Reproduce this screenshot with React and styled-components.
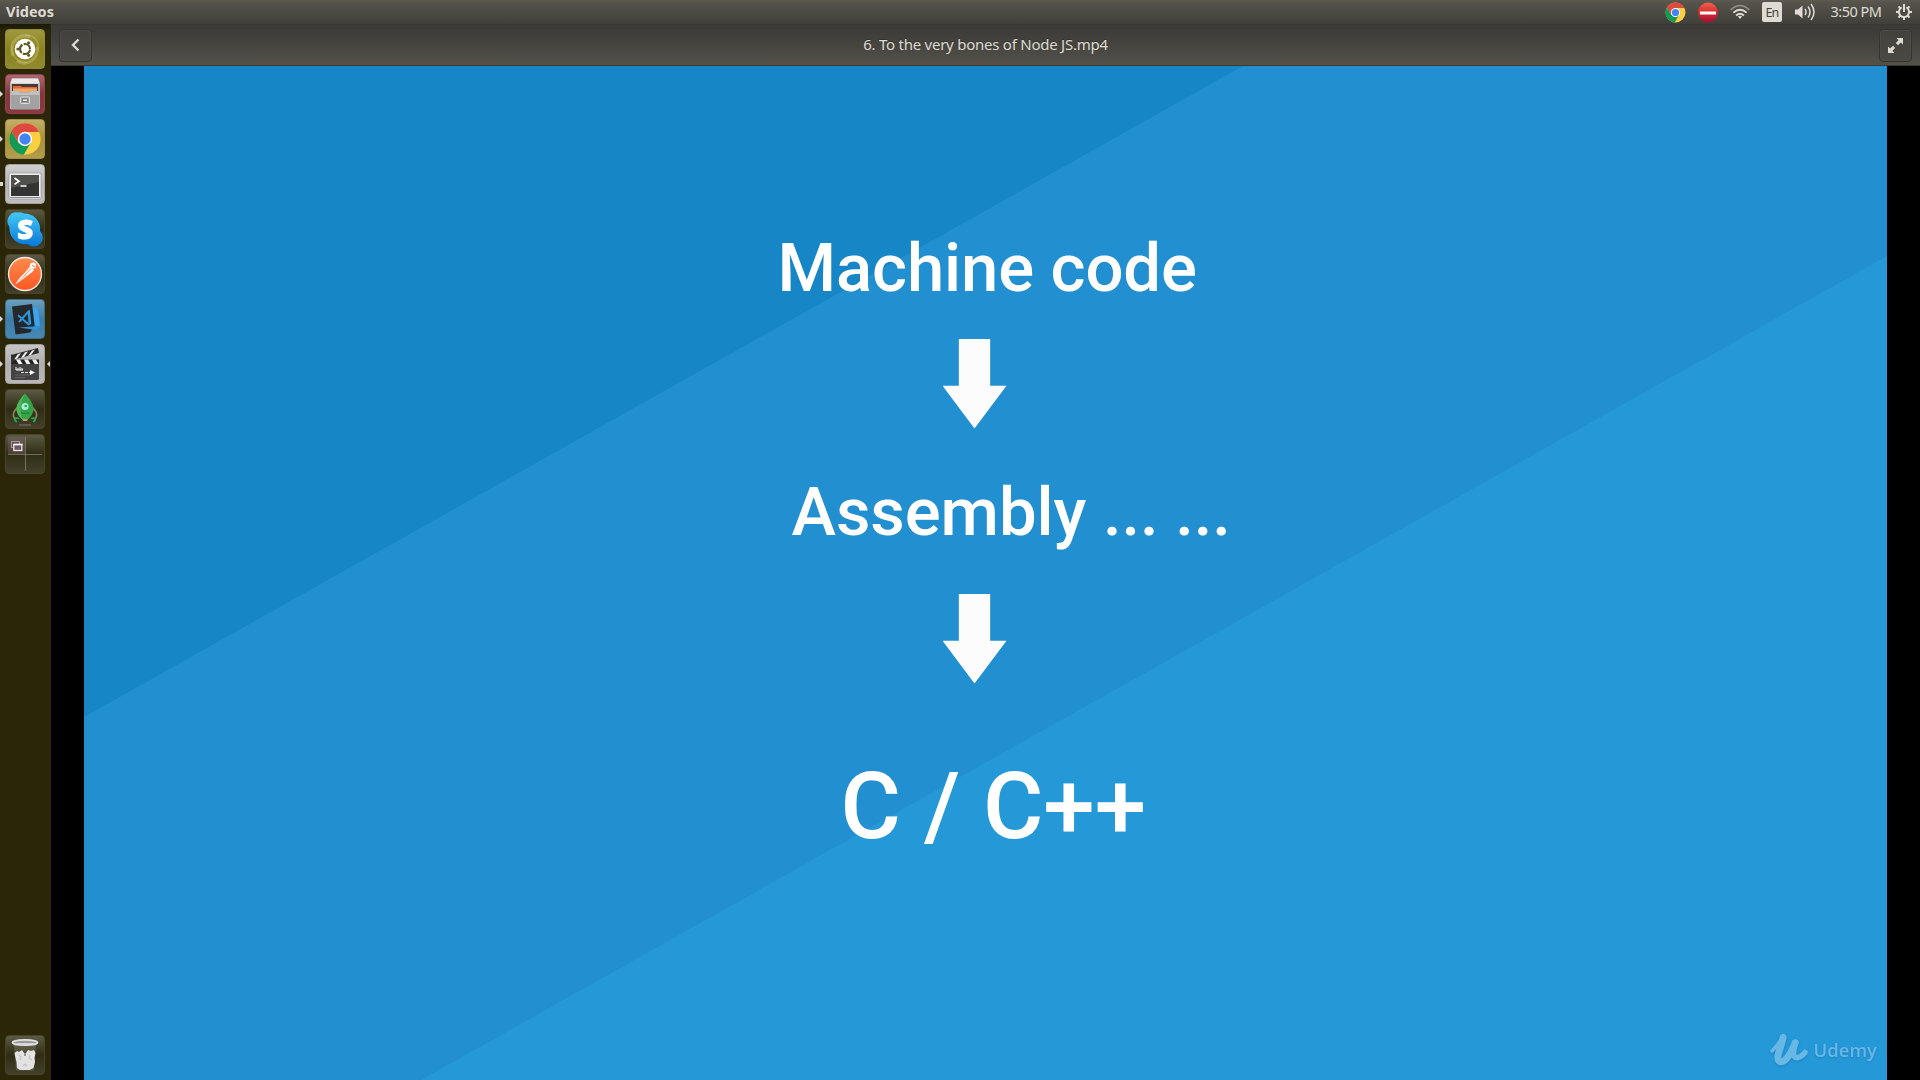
import React from "react";
import styled, { createGlobalStyle, css } from "styled-components";

const GlobalStyle = createGlobalStyle`
  * { box-sizing: border-box; }
  body { margin: 0; background: #000; overflow: hidden; }
`;

const uiFont = css`
  font-family: "Noto Sans", "Open Sans", sans-serif;
`;

const Desktop = styled.div`
  display: flex;
  flex-direction: column;
  width: 1920px;
  height: 1080px;
  overflow: hidden;
  background: #000;
`;

const Panel = styled.header`
  ${uiFont}
  display: flex;
  align-items: center;
  justify-content: space-between;
  flex: none;
  height: 24px;
  padding: 0 8px 0 6px;
  color: #dfdbd2;
  background: linear-gradient(#5d5b50 0, #55534a 3px, #403f3a 100%);
`;

const PanelTitle = styled.span`
  font-size: 14.5px;
  font-weight: 700;
  line-height: 22px;
  height: 24px;
  letter-spacing: 0;
`;

const Indicators = styled.div`
  display: flex;
  align-items: center;
  gap: 12px;
  height: 24px;

  svg { display: block; flex: none; }
`;

const Keyboard = styled.span`
  width: 20px;
  height: 20px;
  border-radius: 2px;
  background: #dfdbd2;
  color: #45433d;
  font-size: 12.5px;
  line-height: 21px;
  letter-spacing: -0.8px;
  text-align: center;
`;

const Clock = styled.span`
  width: 56px;
  height: 24px;
  font-size: 14.5px;
  line-height: 23px;
  letter-spacing: -0.5px;
  text-align: center;
  white-space: nowrap;
`;

const Workspace = styled.div`
  display: flex;
  flex: 1;
  min-height: 0;
`;

const Launcher = styled.nav`
  display: flex;
  flex-direction: column;
  gap: 5px;
  flex: none;
  width: 51px;
  padding: 5px 5px 5px 0;
  background: linear-gradient(#1c1902, #2a2607 7px);
  border-right: 1px solid #25241f;
`;

const Slot = styled.div`
  display: flex;
  align-items: center;
  height: 40px;
  width: 50px;
  margin-top: ${(p) => (p.$last ? "auto" : 0)};
`;

const Marker = styled.i`
  width: ${(p) => (p.$right ? 3 : 5)}px;
  height: ${(p) => (p.$square ? 4 : 6)}px;
  margin-right: ${(p) => (p.$right ? 0 : 2)}px;
  margin-left: ${(p) => (p.$right ? 2 : -2)}px;
  background: ${(p) => (p.$on ? "#d6d6d6" : "transparent")};
  clip-path: ${(p) =>
    p.$square ? "none" : p.$right ? "polygon(100% 0, 0 50%, 100% 100%)" : "polygon(0 0, 40% 0, 100% 50%, 40% 100%, 0 100%)"};
`;

const Tile = styled.div`
  flex: none;
  width: 40px;
  height: 40px;
  padding: 1px;
  border: 1px solid ${(p) => p.$edge};
  border-radius: 4px;
  background: linear-gradient(${(p) => p.$from}, ${(p) => p.$mid} 50%, ${(p) => p.$to});

  svg { display: block; margin: -1px; }
`;

const Player = styled.main`
  display: flex;
  flex-direction: column;
  flex: 1;
`;

const TitleBar = styled.div`
  ${uiFont}
  display: flex;
  align-items: center;
  justify-content: space-between;
  flex: none;
  height: 42px;
  padding: 0 8px;
  background: linear-gradient(#3c3b37 0, #3d3c38 6px, #53514a 100%);
  border-top: 1px solid #383733;
  border-bottom: 1px solid #3b3a34;
`;

const Title = styled.h1`
  margin: 0 0 2px;
  color: #dfdbd2;
  font-size: 15px;
  font-weight: 400;
  line-height: 20px;
  letter-spacing: -0.24px;
  text-shadow: 0 -1px #33322e;
  white-space: nowrap;
`;

const ToolButton = styled.button`
  display: flex;
  align-items: center;
  justify-content: center;
  width: 33px;
  height: 33px;
  padding: 0;
  border: 1px solid #35342f;
  border-radius: 4px;
  background: linear-gradient(#42413c, #4b4943);
  box-shadow: inset 0 0 0 1px #4d4b45;
`;

const Stage = styled.div`
  display: flex;
  flex: 1;
  padding: 0 33px;
  background: #000;
`;

const Slide = styled.section`
  position: relative;
  display: flex;
  flex-direction: column;
  flex: 1;
  overflow: hidden;
  background: #2290d0;
`;

const Backdrop = styled.svg`
  position: absolute;
  inset: 0;
`;

const Line = styled.div`
  position: relative;
  margin: ${(p) => p.$gap}px 0 0 ${(p) => p.$left}px;
  height: ${(p) => p.$height}px;
  color: #fff;
  font-family: Roboto, sans-serif;
  font-size: ${(p) => p.$size}px;
  font-weight: 500;
  line-height: ${(p) => p.$height}px;
  letter-spacing: ${(p) => p.$track || 0}px;
  white-space: pre;
`;

const Arrow = styled.i`
  position: relative;
  width: 64px;
  height: 89.5px;
  margin: ${(p) => p.$gap}px 0 0 858.5px;
  background: #fcfcfd;
  clip-path: polygon(25.5% 0, 74.5% 0, 74.5% 52.3%, 100% 52.3%, 50% 100%, 0 52.3%, 25.5% 52.3%);
`;

const Watermark = styled.div`
  position: absolute;
  right: 10px;
  bottom: 12px;
  display: flex;
  align-items: center;
  gap: 6px;
  height: 36px;
  color: #68b8e5;
  font: 600 18.5px/36px "Open Sans", sans-serif;
  letter-spacing: 0;
  filter: drop-shadow(0 1px 1px rgba(0, 60, 110, 0.25));
`;

const ChromeLogo = ({ size }) => (
  <svg width={size} height={size} viewBox="0 0 40 40">
    <circle cx="20" cy="20" r="19" fill="#fbcf42" />
    <path d="M3.500 10.500A19 19 0 0 1 36.500 10.500L37 11.500H20L12 24.500Z" fill="#de4a3f" />
    <path d="M3.500 10.500L12 24.500L20 28.500L27 24.500L18.500 39A19 19 0 0 1 3.500 10.500Z" fill="#139a57" />
    <circle cx="20" cy="20" r="8.700" fill="#fff" />
    <circle cx="20" cy="20" r="6.900" fill="#4384f3" />
  </svg>
);

const Art = ({ children }) => (
  <svg width="38" height="38" viewBox="1 1 38 38">{children}</svg>
);

const DashArt = () => (
  <Art>
    <g fill="none" stroke="#e3dfa0" strokeOpacity=".3" strokeWidth="3">
      <path d="M8 27C3 12 15 4 25 8" />
      <path d="M12 32C22 38 34 30 32 18" />
      <path d="M20 6C29 5 35 13 33 22M7 17C6 28 14 34 22 33" strokeWidth="1.500" />
    </g>
    <circle cx="20" cy="20" r="10.300" fill="#fff" />
    <circle cx="20" cy="20" r="5" fill="none" stroke="#5d5620" strokeWidth="2.200" strokeDasharray="9.200 1.270" strokeDashoffset="-.6" />
    <g fill="#5d5620"><circle cx="12.900" cy="20" r="1.500" /><circle cx="23.600" cy="13.800" r="1.500" /><circle cx="23.600" cy="26.200" r="1.500" /></g>
  </Art>
);

const FilesArt = () => (
  <Art>
    <path d="M7 4.500h26l2 5V35H5V9.500z" fill="#b9b9b9" />
    <path d="M7 4.500h26l1.500 5h-29z" fill="#e9e9e9" />
    <path d="M7 10h26v8H7z" fill="#4a3834" />
    <path d="M8 12h8l1 1h15v6H8z" fill="#df6a35" />
    <path d="M8 14.500h24v4H8z" fill="#f0a76b" />
    <path d="M5.500 17h8l2 1.500h9l2-1.500h8L34 35.500H6z" fill="#a2a2a2" />
    <path d="M5.500 17h8l2 1.500h9l2-1.500h8v4h-29z" fill="#c0c0c0" />
    <rect x="15.500" y="23" width="9" height="6.500" rx="1" fill="#999" stroke="#dedede" />
    <rect x="17.500" y="25" width="5" height="2.500" fill="#eee" stroke="#666" strokeWidth=".8" />
  </Art>
);

const TerminalArt = () => (
  <Art>
    <rect x="4" y="9" width="32" height="26" rx="1.500" fill="#eee" stroke="#8e8e8e" strokeWidth=".6" />
    <rect x="6" y="11" width="28" height="21" fill="#343432" />
    <path d="M6 11h28v7L6 24z" fill="#50504d" />
    <path d="M9.500 14l4.500 3.200-4.500 3.200M15.500 22h6" fill="none" stroke="#fff" strokeWidth="1.700" />
    <path d="M5 33.500h30" stroke="#888" />
  </Art>
);

const SkypeArt = () => (
  <Art>
    <defs><linearGradient id="sky" x2="0" y2="1"><stop stopColor="#43c8f5" /><stop offset="1" stopColor="#0778d8" /></linearGradient></defs>
    <path d="M13 3.500a9.500 9.500 0 0 1 6 1A15.500 15.500 0 0 1 35 22a9 9 0 0 1-12.500 13A15.500 15.500 0 0 1 4.500 18 9 9 0 0 1 13 3.500Z" fill="url(#sky)" />
    <text x="20" y="29.500" textAnchor="middle" fontFamily="Open Sans, sans-serif" fontWeight="800" fontSize="27" fill="#fff" stroke="#fff" strokeWidth="1">S</text>
  </Art>
);

const PostmanArt = () => (
  <Art>
    <defs><linearGradient id="post" x2="0" y2="1"><stop stopColor="#ff8b4c" /><stop offset="1" stopColor="#ff5722" /></linearGradient></defs>
    <circle cx="20" cy="20" r="16.500" fill="url(#post)" stroke="#f5ece6" strokeWidth="1.300" />
    <circle cx="28" cy="11.600" r="3.100" fill="#fff" />
    <path d="M25 12.500l4 3.500-5 5-8 5.500-6 4 5-7 5-5z" fill="#fff" />
    <path d="M15 26.500l11-12M19.500 23.500l6.500-4" stroke="#ff713a" strokeWidth=".8" />
    <path d="M27 11.300l3 1.500" stroke="#ff713a" />
  </Art>
);

const CodeArt = () => (
  <Art>
    <path d="M27.500 7.500L33 9l2 18.500-4 3.500-18-2 14-2z" fill="#1f86cf" />
    <path d="M27.500 7.500L33 9l2 18.500-5-1z" fill="#3fa3ea" />
    <path d="M7 7.500L27 5l2.500 22L25 33.500 10.500 35.500z" fill="#25282b" />
    <path d="M13.500 28.500L35 27l-4 4z" fill="#2f93db" />
    <path d="M24 11.500l1.300 13-1.800.8L13 16.200M24.500 24l-1-11.500-9.500 10.500" fill="none" stroke="#2d93da" strokeWidth="1.900" />
  </Art>
);

const VideosArt = () => (
  <Art>
    <rect x="6" y="19" width="28" height="17" rx="1.500" fill="#434343" />
    <path d="M6 11l27-7 1 5L7.500 16z" fill="#2c2c2c" />
    <path d="M9 15.500l4-5.500 3-.8-4 5.500zM16 13.700l4-5.500 3-.8-4 5.500zM23 11.900l4-5.500 3-.8-4 5.500z" fill="#efefef" />
    <rect x="6" y="15.500" width="28" height="4.500" fill="#222" />
    <path d="M11 15.500h4l2.500 4.500h-4zM19 15.500h4l2.500 4.500h-4zM27 15.500h4l2.500 4.500h-4z" fill="#f4f4f4" />
    <path d="M6 10v10l4-4z" fill="#333" />
    <path d="M11 26v-3m2 3v-2m2 2v-3m2 3v-2m-6 2h7" stroke="#fff" />
    <path d="M16 28.500h10" stroke="#ddd" strokeDasharray="3 1" />
    <path d="M25 26l5 2.500-5 2.500z" fill="#fff" />
    <path d="M10 31h14M10 33.500h10" stroke="#777" strokeWidth=".7" />
  </Art>
);

const RocketArt = () => (
  <Art>
    <path d="M12 19c-5 5-4 9-2 11M28 19c5 5 4 9 2 11" fill="none" stroke="#8a835c" strokeWidth="1.800" />
    <path d="M14 36h12" stroke="#777" strokeWidth="1" />
    <path d="M20 4.500C25 10 29 16 28.500 21c-.5 4-3 7-5 9h-7c-2-2-4.500-5-5-9C11 16 15 10 20 4.500Z" fill="#35a34a" />
    <path d="M20 4.500C15 10 11 16 11.500 21c.5 4 3 7 5 9h1C13 20 17 10 20 4.500Z" fill="#50b65d" />
    <circle cx="20" cy="17.500" r="3.500" fill="#a8f1d1" /><circle cx="20.700" cy="17" r="1.300" fill="#3a9779" />
    <path d="M16 23.500q4 2 8 0" fill="none" stroke="#1d7e36" strokeWidth="1.200" />
    <path d="M17 30h6l-1 2h-4z" fill="#b5a45f" />
    <path d="M14 29.500c-5-2-5 3-2 3M26 29.500c5-2 5 3 2 3" fill="none" stroke="#25ac4e" strokeWidth="1.800" />
  </Art>
);

const WorkspaceArt = () => (
  <Art>
    <path d="M3 3h17v17H3z" fill="#8e6e80" fillOpacity=".3" />
    <path d="M20.500 3v34M3 20.500h34" stroke="#8b8875" strokeOpacity=".7" />
    <rect x="6.500" y="7.500" width="8" height="6" fill="none" stroke="#a99ca4" />
    <rect x="8.800" y="10.500" width="8" height="6" fill="#6b5865" stroke="#e9e5e8" strokeWidth="1.300" />
    <path d="M8.500 10.500h9" stroke="#fff" strokeWidth="1.500" />
  </Art>
);

const TrashArt = () => (
  <Art>
    <path d="M9 10l2 25.500h18L31 10z" fill="#b4b4aa" fillOpacity=".22" />
    <path d="M9.500 18l2.500-2 2 1 3-2 2 3 2 0 2-3 3 1 3-1 1.500 3-1 5 .5 4-1.500 6-4 2H15l-3-2-.5-6-1-4z" fill="#e2e2e2" />
    <path d="M14 20l2 2-1 3M25 20l-1 3 3 2M18 31l2-2 2 2" fill="none" stroke="#c2c2c2" strokeWidth="1.200" />
    <path d="M20 18v3" stroke="#77756a" strokeWidth="1.400" />
    <ellipse cx="20" cy="7.500" rx="12.500" ry="2.700" fill="#9a9a9a" stroke="#e2e2e2" strokeWidth="1.800" />
    <path d="M11.500 9h17" stroke="#dcdcdc" strokeWidth="1.800" />
  </Art>
);

const glass = { edge: "#47442b", from: "#5c5944", mid: "#302d15", to: "#43402b" };

const apps = [
  { name: "Dash", Icon: DashArt, edge: "#8e8840", from: "#a19940", mid: "#8a821c", to: "#918a2d" },
  { name: "Files", Icon: FilesArt, on: true, edge: "#8c4249", from: "#ab6870", mid: "#86353c", to: "#8b3941" },
  { name: "Chrome", chrome: true, on: true, edge: "#a28f47", from: "#c2b06a", mid: "#a98f36", to: "#b49e4d" },
  { name: "Terminal", Icon: TerminalArt, on: true, square: true, edge: "#a2a1a0", from: "#cfcecf", mid: "#b6b4b5", to: "#c0bec0" },
  { name: "Skype", Icon: SkypeArt, ...glass },
  { name: "Postman", Icon: PostmanArt, ...glass },
  { name: "Code", Icon: CodeArt, on: true, edge: "#3c6d8b", from: "#6a9fbe", mid: "#3c7da9", to: "#4688b3" },
  { name: "Videos", Icon: VideosArt, on: true, active: true, edge: "#a19f9e", from: "#c6c4c4", mid: "#afadad", to: "#bab8b7" },
  { name: "Robomongo", Icon: RocketArt, ...glass },
  { name: "Workspaces", Icon: WorkspaceArt, ...glass },
  { name: "Trash", Icon: TrashArt, last: true, ...glass },
];

const ChromeArt = () => (
  <Art>
    <svg x="3.500" y="3.500" width="33" height="33" viewBox="0 0 40 40"><ChromeLogo size={40} /></svg>
  </Art>
);

const App = () => (
  <Desktop>
    <GlobalStyle />
    <Panel>
      <PanelTitle>Videos</PanelTitle>
      <Indicators>
        <ChromeLogo size={21} />
        <svg width="20" height="21" viewBox="0 0 20 21">
          <defs><linearGradient id="stop" x2="0" y2="1"><stop stopColor="#f0624f" /><stop offset=".5" stopColor="#d92b2b" /><stop offset="1" stopColor="#a50f38" /></linearGradient></defs>
          <circle cx="10" cy="10.500" r="10" fill="url(#stop)" />
          <path d="M2 9.500h16v3H2z" fill="#fff" />
        </svg>
        <svg width="20" height="16" viewBox="0 0 20 16" fill="none" stroke="#dfdbd2" strokeWidth="1.700">
          <path d="M.7 5.800Q10-2.500 19.300 5.800" stroke="#8e8b83" />
          <path d="M3.300 8.700Q10 2.800 16.700 8.700" />
          <path d="M6 11.500Q10 8 14 11.500" />
          <path d="M8 12.500Q10 11 12 12.500L10 15z" fill="#dfdbd2" stroke="none" />
        </svg>
        <Keyboard>En</Keyboard>
        <svg width="22" height="18" viewBox="0 0 22 18" fill="none" stroke="#dfdbd2" strokeWidth="1.500">
          <path d="M1 6.500h3l4.500-4v13l-4.500-4H1z" fill="#dfdbd2" stroke="none" />
          <path d="M11 6q2 3 0 6M14 3.500q4 5.500 0 11M17 1q6 8 0 16" />
        </svg>
        <Clock>3:50 PM</Clock>
        <svg width="16" height="18" viewBox="0 0 16 18" fill="none" stroke="#dfdbd2">
          <path d="M5.800 4.400a5.100 5.100 0 1 0 4.400 0" strokeWidth="2" />
          <path d="M8 1v8" strokeWidth="2" />
          <path d="M2.500 3.500l1.800 1.800M13.500 3.500l-1.800 1.800M0 9h3M13 9h3M2.500 14.500l1.800-1.800M13.500 14.500l-1.800-1.800M8 14v3" strokeWidth="2" />
        </svg>
      </Indicators>
    </Panel>
    <Workspace>
      <Launcher>
        {apps.map(({ name, Icon, chrome, on, square, active, last, edge, from, mid, to }) => (
          <Slot key={name} $last={last} title={name}>
            <Marker $on={on} $square={square} />
            <Tile $edge={edge} $from={from} $mid={mid} $to={to}>
              {chrome ? <ChromeArt /> : <Icon />}
            </Tile>
            <Marker $on={active} $right />
          </Slot>
        ))}
      </Launcher>
      <Player>
        <TitleBar>
          <ToolButton aria-label="Back">
            <svg width="14" height="14" viewBox="0 0 14 14" fill="none" stroke="#dfdbd2" strokeWidth="2.300">
              <path d="M9.500 1.500L4 7l5.500 5.500" />
            </svg>
          </ToolButton>
          <Title>6. To the very bones of Node JS.mp4</Title>
          <ToolButton aria-label="Fullscreen">
            <svg width="15" height="15" viewBox="0 0 14 14" fill="#dfdbd2">
              <path d="M8 0H14v6L11.900 4.100 9.300 6.700 7.300 4.700 9.900 2.100zM6 14H0V8l2.100 1.900L4.700 7.300 6.700 9.300 4.100 11.900z" />
            </svg>
          </ToolButton>
        </TitleBar>
        <Stage>
          <Slide>
            <Backdrop width="1803" height="1014" viewBox="0 0 1803 1014">
              <path d="M0 0H1159L0 651z" fill="#1786c7" />
              <path d="M1803 190V1014H337z" fill="#2598d8" />
            </Backdrop>
            <Line $size={67} $height={80} $gap={162} $left={693.5} $track={-0.1}>Machine code</Line>
            <Arrow $gap={31} />
            <Line $size={67} $height={80} $gap={43.5} $left={707.5} $track={-0.05}>Assembly ... ...</Line>
            <Arrow $gap={42} />
            <Line $size={92.5} $height={110} $gap={68} $left={756.5}>C / C++</Line>
            <Watermark>
              <svg width="38" height="34" viewBox="0 0 38 34" fill="none" stroke="#68b8e5" strokeLinecap="round" strokeLinejoin="round">
                <path d="M2 18C7 13 10 8 13 4" strokeWidth="3.500" />
                <path d="M13 4.500C12 13 5 24 9 28c5 4 12-7 16-18" strokeWidth="7" />
                <path d="M26 9c-3 9-4 17 2 15.500 3-.5 5-2.500 7-5" strokeWidth="5.500" />
              </svg>
              Udemy
            </Watermark>
          </Slide>
        </Stage>
      </Player>
    </Workspace>
  </Desktop>
);

export default App;
